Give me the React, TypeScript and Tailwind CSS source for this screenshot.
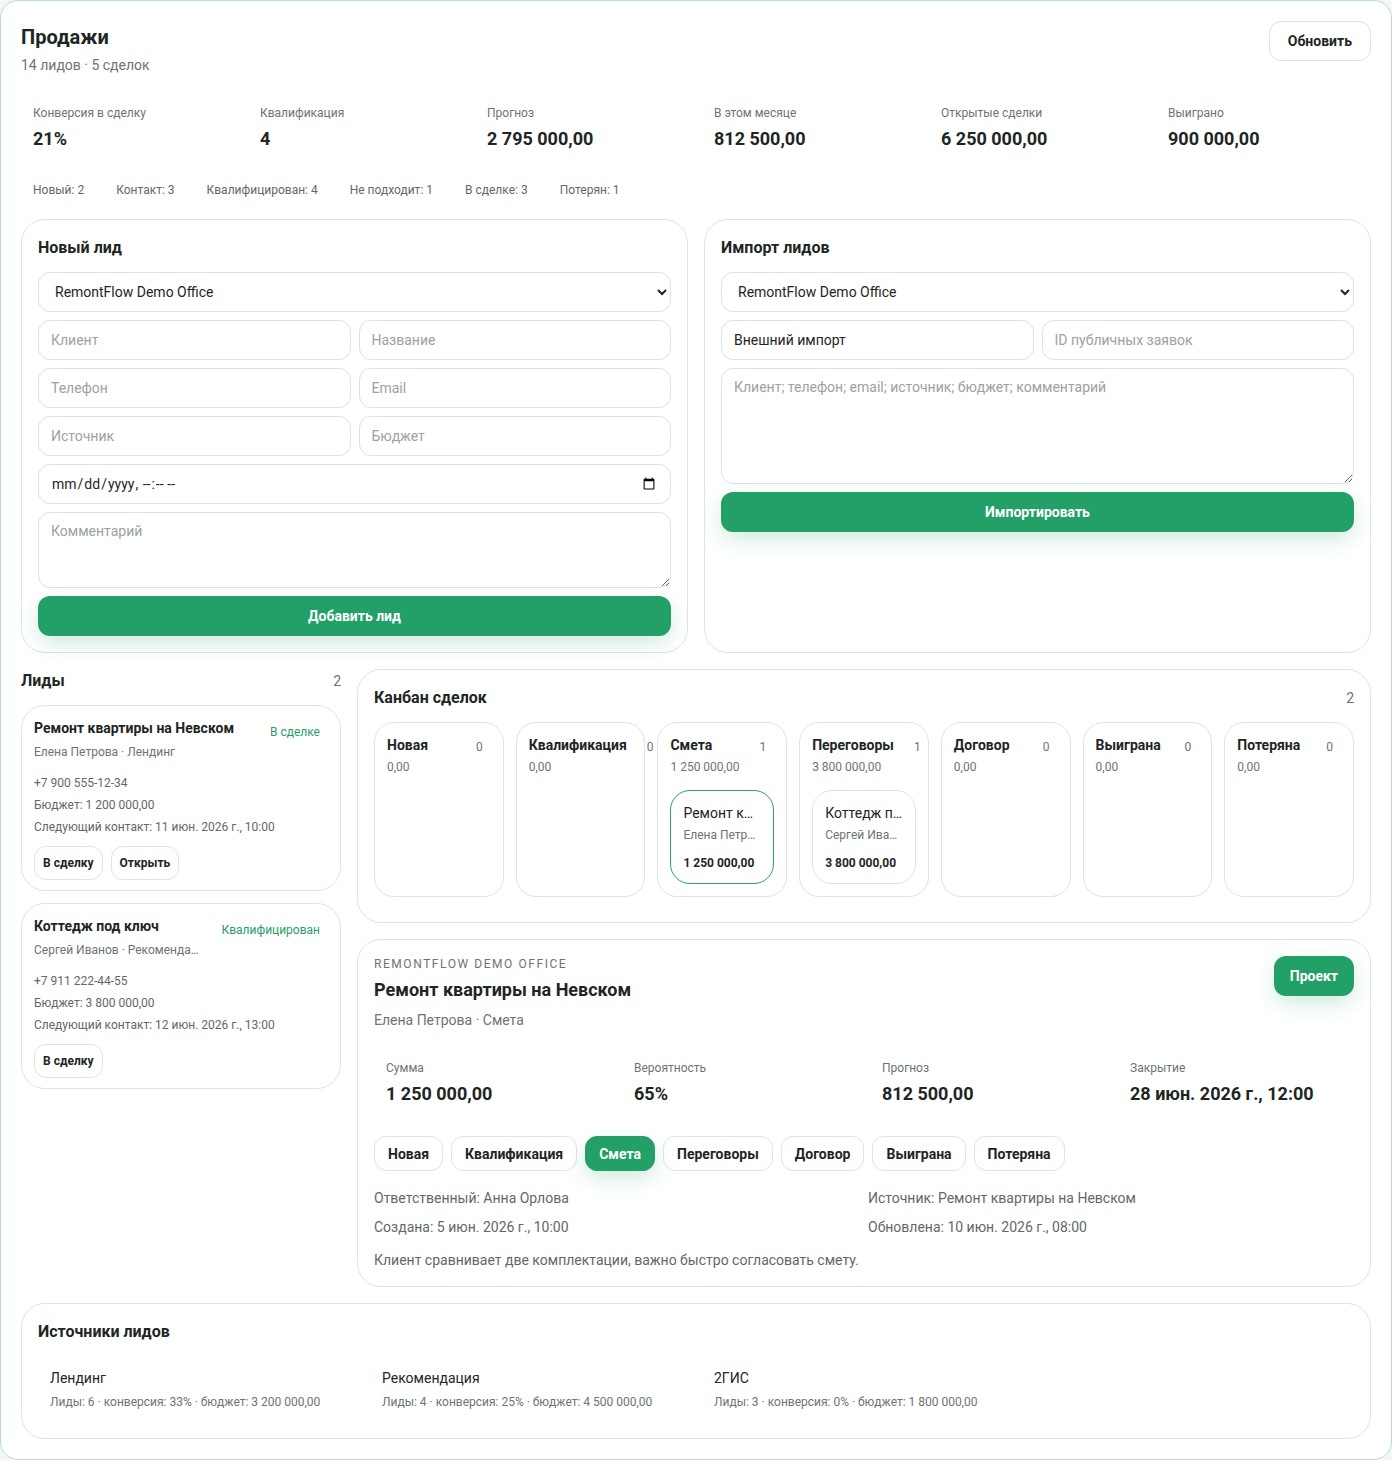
import React from "react"

const metrics = [
    { label: "Конверсия в сделку", value: "21%" },
    { label: "Квалификация", value: "4" },
    { label: "Прогноз", value: "2 795 000,00" },
    { label: "В этом месяце", value: "812 500,00" },
    { label: "Открытые сделки", value: "6 250 000,00" },
    { label: "Выиграно", value: "900 000,00" },
]

const statuses = ["Новый: 2", "Контакт: 3", "Квалифицирован: 4", "Не подходит: 1", "В сделке: 3", "Потерян: 1"]

const leads = [
    {
        title: "Ремонт квартиры на Невском",
        status: "В сделке",
        sub: "Елена Петрова · Лендинг",
        phone: "+7 900 555-12-34",
        budget: "Бюджет: 1 200 000,00",
        next: "Следующий контакт: 11 июн. 2026 г., 10:00",
        open: true,
    },
    {
        title: "Коттедж под ключ",
        status: "Квалифицирован",
        sub: "Сергей Иванов · Рекомендация",
        phone: "+7 911 222-44-55",
        budget: "Бюджет: 3 800 000,00",
        next: "Следующий контакт: 12 июн. 2026 г., 13:00",
        open: false,
    },
]

type Deal = { title: string; client: string; amount: string; active?: boolean }

const columns: { name: string; count: number; total: string; deals: Deal[] }[] = [
    { name: "Новая", count: 0, total: "0,00", deals: [] },
    { name: "Квалификация", count: 0, total: "0,00", deals: [] },
    {
        name: "Смета",
        count: 1,
        total: "1 250 000,00",
        deals: [{ title: "Ремонт квартиры на Невском", client: "Елена Петрова", amount: "1 250 000,00", active: true }],
    },
    {
        name: "Переговоры",
        count: 1,
        total: "3 800 000,00",
        deals: [{ title: "Коттедж под ключ", client: "Сергей Иванов", amount: "3 800 000,00" }],
    },
    { name: "Договор", count: 0, total: "0,00", deals: [] },
    { name: "Выиграна", count: 0, total: "0,00", deals: [] },
    { name: "Потеряна", count: 0, total: "0,00", deals: [] },
]

const dealStats = [
    { label: "Сумма", value: "1 250 000,00" },
    { label: "Вероятность", value: "65%" },
    { label: "Прогноз", value: "812 500,00" },
    { label: "Закрытие", value: "28 июн. 2026 г., 12:00" },
]

const stages = ["Новая", "Квалификация", "Смета", "Переговоры", "Договор", "Выиграна", "Потеряна"]

const sources = [
    { name: "Лендинг", stats: "Лиды: 6 · конверсия: 33% · бюджет: 3 200 000,00" },
    { name: "Рекомендация", stats: "Лиды: 4 · конверсия: 25% · бюджет: 4 500 000,00" },
    { name: "2ГИС", stats: "Лиды: 3 · конверсия: 0% · бюджет: 1 800 000,00" },
]

const field =
    "h-10 w-full rounded-xl border border-[#dbe2df] bg-white px-3 text-sm text-[#1d2623] placeholder:text-[#9aa3a0] outline-none"

function Card({ children, className = "" }: { children: React.ReactNode; className?: string }) {
    return <div className={`rounded-[24px] border border-[#dde4e1] bg-white p-4 ${className}`}>{children}</div>
}

function GreenButton({ children }: { children: React.ReactNode }) {
    return (
        <button className="h-10 w-full rounded-xl bg-[#22a067] text-sm font-bold text-white shadow-[0_8px_20px_rgba(34,160,103,0.2)]">
            {children}
        </button>
    )
}

export default function App() {
    return (
        <div className="bg-[#f3f7f5] font-['Roboto',sans-serif] text-[#1d2623]">
            <div className="flex flex-col gap-4 rounded-[18px] border border-[#b8dccb] bg-white p-5">
                {/* Header */}
                <div className="flex items-start justify-between">
                    <div>
                        <h1 className="mt-0.5 text-xl font-bold leading-7">Продажи</h1>
                        <p className="mt-1 text-sm text-[#6b7571]">14 лидов · 5 сделок</p>
                    </div>
                    <button className="h-10 rounded-xl border border-[#dde4e1] px-[18px] text-sm font-bold">Обновить</button>
                </div>

                {/* Metrics */}
                <div className="mt-0.5 flex flex-col gap-2.5">
                    <div className="grid grid-cols-6 gap-3">
                        {metrics.map((m) => (
                            <div key={m.label} className="px-3 py-3">
                                <div className="text-xs leading-4 text-[#6b7571]">{m.label}</div>
                                <div className="mt-1 text-lg font-bold leading-7">{m.value}</div>
                            </div>
                        ))}
                    </div>
                    <div className="flex gap-2">
                        {statuses.map((s) => (
                            <span key={s} className="px-3 pb-[5px] pt-[7px] text-xs leading-4 text-[#5f6965]">
                                {s}
                            </span>
                        ))}
                    </div>
                </div>

                {/* Forms */}
                <div className="grid grid-cols-2 gap-4">
                    <Card>
                        <h2 className="text-base font-bold leading-6">Новый лид</h2>
                        <div className="mt-3 flex flex-col gap-2">
                            <select className={field}>
                                <option>RemontFlow Demo Office</option>
                            </select>
                            <div className="grid grid-cols-2 gap-2">
                                <input className={field} placeholder="Клиент" />
                                <input className={field} placeholder="Название" />
                                <input className={field} placeholder="Телефон" />
                                <input className={field} placeholder="Email" />
                                <input className={field} placeholder="Источник" />
                                <input className={field} placeholder="Бюджет" />
                            </div>
                            <input type="datetime-local" className={field} />
                            <textarea
                                className="h-[76px] w-full rounded-xl border border-[#dbe2df] px-3 py-2 text-sm placeholder:text-[#9aa3a0] outline-none"
                                placeholder="Комментарий"
                            />
                            <GreenButton>Добавить лид</GreenButton>
                        </div>
                    </Card>
                    <Card>
                        <h2 className="text-base font-bold leading-6">Импорт лидов</h2>
                        <div className="mt-3 flex flex-col gap-2">
                            <select className={field}>
                                <option>RemontFlow Demo Office</option>
                            </select>
                            <div className="grid grid-cols-2 gap-2">
                                <input className={field} defaultValue="Внешний импорт" />
                                <input className={field} placeholder="ID публичных заявок" />
                            </div>
                            <textarea
                                className="h-[116px] w-full rounded-xl border border-[#dbe2df] px-3 py-2 text-sm placeholder:text-[#9aa3a0] outline-none"
                                placeholder="Клиент; телефон; email; источник; бюджет; комментарий"
                            />
                            <GreenButton>Импортировать</GreenButton>
                        </div>
                    </Card>
                </div>

                {/* Leads + deals */}
                <div className="grid grid-cols-[320px_1fr] items-start gap-4">
                    <div className="flex flex-col gap-3">
                        <div className="flex items-center justify-between">
                            <h2 className="text-base font-bold leading-6">Лиды</h2>
                            <span className="text-sm text-[#6b7571]">2</span>
                        </div>
                        {leads.map((l) => (
                            <div key={l.title} className="h-[186px] rounded-[24px] border border-[#dde4e1] bg-white p-3">
                                <div className="flex items-start justify-between gap-3">
                                    <div className="min-w-0 flex-1">
                                        <div className="text-sm font-bold leading-5">{l.title}</div>
                                        <div className="mt-1.5 truncate text-xs leading-4 text-[#6b7571]">{l.sub}</div>
                                    </div>
                                    <span className="mt-0.5 shrink-0 px-2 py-1 text-xs leading-4 text-[#2a9d66]">{l.status}</span>
                                </div>
                                <div className="mt-3 text-xs leading-[22px] text-[#5f6965]">
                                    <div>{l.phone}</div>
                                    <div>{l.budget}</div>
                                    <div>{l.next}</div>
                                </div>
                                <div className="mt-2 flex gap-2">
                                    <button className="rounded-xl border border-[#dde4e1] px-2 py-2 text-xs font-bold leading-4">
                                        В сделку
                                    </button>
                                    {l.open && (
                                        <button className="rounded-xl border border-[#dde4e1] px-2 py-2 text-xs font-bold leading-4">
                                            Открыть
                                        </button>
                                    )}
                                </div>
                            </div>
                        ))}
                    </div>

                    <div className="flex flex-col gap-4">
                        {/* Kanban */}
                        <Card>
                            <div className="flex items-center justify-between">
                                <h2 className="text-base font-bold leading-6">Канбан сделок</h2>
                                <span className="text-sm text-[#6b7571]">2</span>
                            </div>
                            <div className="mt-3 grid grid-cols-7 gap-3 pb-[9px]">
                                {columns.map((c) => (
                                    <div key={c.name} className="h-[175px] rounded-[20px] border border-[#dde4e1] bg-white p-3">
                                        <div className="flex items-center justify-between gap-3">
                                            <span className="whitespace-nowrap text-sm font-bold leading-5">{c.name}</span>
                                            <span className="mt-1 px-2 text-xs leading-4 text-[#6b7571]">{c.count}</span>
                                        </div>
                                        <div className="mt-1 text-xs leading-4 text-[#6b7571]">{c.total}</div>
                                        {c.deals.map((d) => (
                                            <div
                                                key={d.title}
                                                className={`mt-[15px] rounded-[20px] border bg-white p-3 ${
                                                    d.active ? "border-[#2aa06a]" : "border-[#dde4e1]"
                                                }`}
                                            >
                                                <div className="truncate text-sm leading-5">{d.title}</div>
                                                <div className="mt-1 truncate text-xs leading-4 text-[#6b7571]">{d.client}</div>
                                                <div className="mt-3 text-xs font-bold leading-4">{d.amount}</div>
                                            </div>
                                        ))}
                                    </div>
                                ))}
                            </div>
                        </Card>

                        {/* Deal details */}
                        <Card>
                            <div className="flex items-start justify-between">
                                <div>
                                    <div className="text-xs uppercase leading-4 tracking-[0.13em] text-[#6b7571]">RemontFlow Demo Office</div>
                                    <h2 className="mt-1 text-lg font-bold leading-7">Ремонт квартиры на Невском</h2>
                                    <div className="mt-1.5 text-sm leading-5 text-[#6b7571]">Елена Петрова · Смета</div>
                                </div>
                                <button className="h-10 rounded-xl bg-[#22a067] px-4 text-sm font-bold text-white shadow-[0_8px_20px_rgba(34,160,103,0.2)]">
                                    Проект
                                </button>
                            </div>
                            <div className="mt-[18px] grid grid-cols-4 gap-3">
                                {dealStats.map((s) => (
                                    <div key={s.label} className="px-3 py-3">
                                        <div className="text-xs leading-4 text-[#6b7571]">{s.label}</div>
                                        <div className="mt-1 text-lg font-bold leading-7">{s.value}</div>
                                    </div>
                                ))}
                            </div>
                            <div className="mt-4 flex gap-2">
                                {stages.map((s) =>
                                    s === "Смета" ? (
                                        <button
                                            key={s}
                                            className="h-[35px] rounded-xl border border-[#22a067] bg-[#22a067] px-[13px] text-sm font-bold text-white shadow-[0_8px_20px_rgba(34,160,103,0.2)]"
                                        >
                                            {s}
                                        </button>
                                    ) : (
                                        <button key={s} className="h-[35px] rounded-xl border border-[#dde4e1] px-[13px] text-sm font-bold">
                                            {s}
                                        </button>
                                    )
                                )}
                            </div>
                            <div className="mt-[17px] grid grid-cols-2 gap-x-2 gap-y-[9px] text-sm leading-5 text-[#5f6965]">
                                <div>Ответственный: Анна Орлова</div>
                                <div>Источник: Ремонт квартиры на Невском</div>
                                <div>Создана: 5 июн. 2026 г., 10:00</div>
                                <div>Обновлена: 10 июн. 2026 г., 08:00</div>
                            </div>
                            <p className="mt-[13px] text-sm leading-5 text-[#5f6965]">
                                Клиент сравнивает две комплектации, важно быстро согласовать смету.
                            </p>
                        </Card>
                    </div>
                </div>

                {/* Sources */}
                <Card>
                    <h2 className="text-base font-bold leading-6">Источники лидов</h2>
                    <div className="mt-3 grid grid-cols-4 gap-3">
                        {sources.map((s) => (
                            <div key={s.name} className="px-3 py-3">
                                <div className="text-sm leading-5">{s.name}</div>
                                <div className="mt-1.5 text-xs leading-4 text-[#6b7571]">{s.stats}</div>
                            </div>
                        ))}
                    </div>
                </Card>
            </div>
        </div>
    )
}
